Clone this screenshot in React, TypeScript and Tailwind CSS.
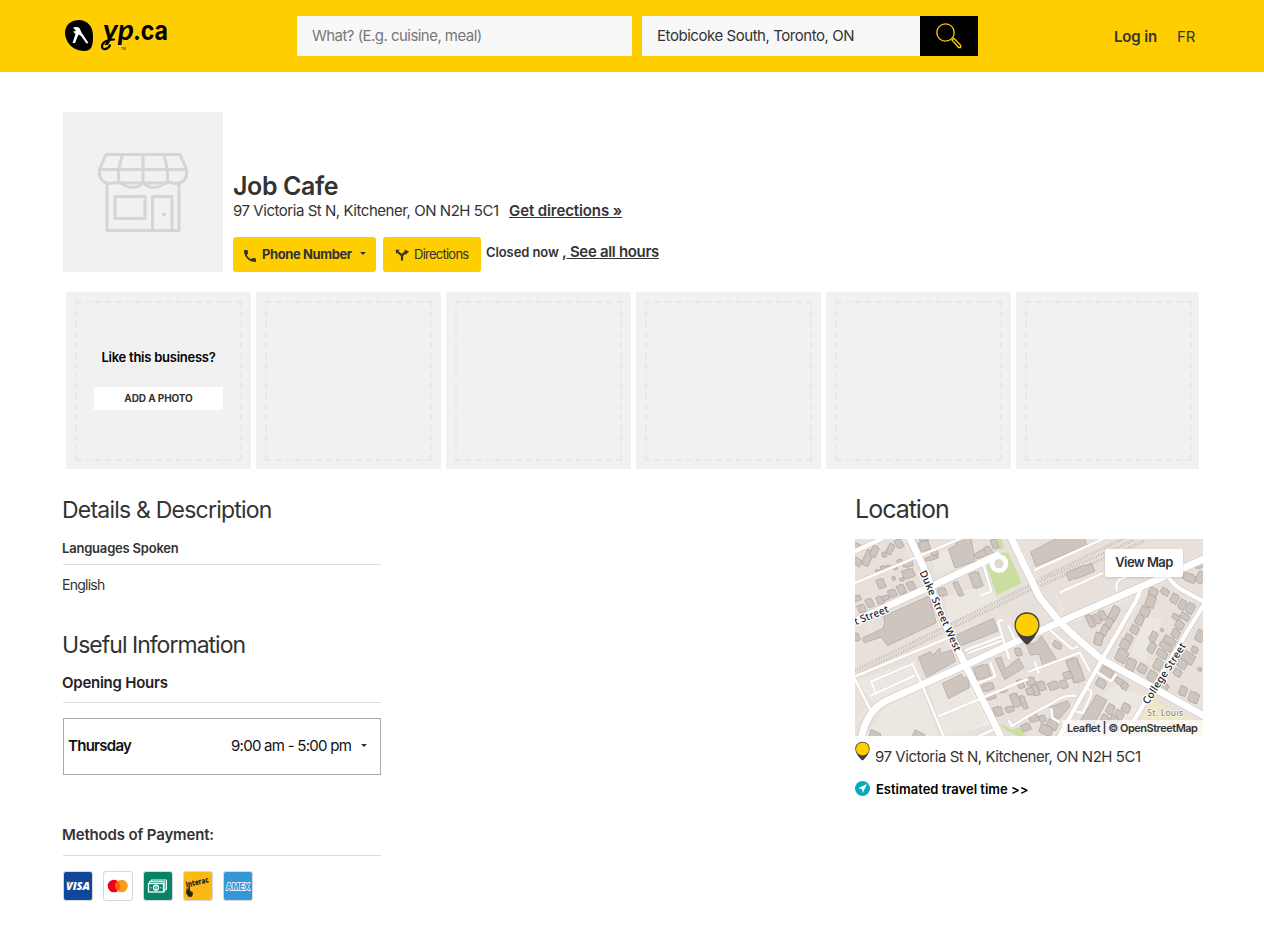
import React from "react";
import { MdCall } from "react-icons/md";

const R = 519;

const Marker = ({ className }: { className: string }) => (
  <svg viewBox="0 0 26 33" className={className}>
    <path d="M0.5 13C0.5 5.5 6 .3 13 .3S25.500 5.500 25.500 13c0 5-3 9-6 13.500L15 31.500q-2 2-4 0L6.500 26.500C3.500 22 .5 18 .5 13z" fill="#3f3f3f" />
    <circle cx="13" cy="13" r="11.300" fill="#ffce00" />
  </svg>
);

const SplitIcon = () => (
  <svg viewBox="0 0 14 12" className="h-3 w-3.5" fill="none" stroke="#333" strokeWidth="2.200">
    <path d="M7 11.500V7.600Q7 6 3 3.200M7 7.500Q7.500 4.500 11 3.200" />
    <path d="M.5.800h4.200L1.500 5z" fill="#333" stroke="none" />
    <path d="M9.500.500 14 2.500 10.500 6z" fill="#333" stroke="none" />
  </svg>
);

const Storefront = () => (
  <svg viewBox="0 0 90 80" className="h-20 w-[90px]" fill="none" stroke="#d5d5d5" strokeWidth="3" strokeLinejoin="round">
    <path d="M8 2.500h74l6.500 15v4a10 10 0 0 1-10 10q-5 0-10-2-6 6-13 6-6 0-10-5-5 5-11 5-7 0-13-6-5 2-10 2a10 10 0 0 1-10-10v-4z" />
    <path d="M1.500 17.500h87M24.500 2.500l-4 15v12M45 2.500v27M66 2.500l3.500 15v12M9 31v47.500h72V31M20 31q12 0 50 0" />
    <path d="M17 44.500h30v22H17zM54.500 78V44.500H74V78" />
    <circle cx="66" cy="62.500" r="2" fill="#d5d5d5" stroke="none" />
  </svg>
);

const Logo = () => (
  <svg viewBox="0 0 110 44" className="h-11 w-[110px] overflow-visible">
    <path d="M0 19C0 10 7 6 14 6s14 5 14 16c0 9-1 15-9 15C8 37 0 28 0 19z" fill="#000" />
    <path d="M8 13.500c2.500-1 5-.7 6.500.6l2 4.400L23.500 29l-2 .6L16 22l-2.500-1.500L10 29H7.500l3-9L8 17.500l3-.5z" fill="#fff" />
    <text x="38" y="26" fontFamily="Lato, sans-serif" fontSize="29" fontStyle="italic" fontWeight="700" textLength="31" lengthAdjust="spacingAndGlyphs">yp</text>
    <path d="M49 25.500C41 25.500 37 29 37 32.500s5 4 8-1" fill="none" stroke="#000" strokeWidth="2.200" strokeLinecap="round" />
    <text x="68" y="26" fontFamily="Inter, sans-serif" fontSize="26" fontWeight="700" textLength="35" lengthAdjust="spacingAndGlyphs">.ca</text>
    <text x="56" y="35.500" fontFamily="Inter, sans-serif" fontSize="3">TM</text>
  </svg>
);

type Block = [number, number, number, number, number];

const blocks: Block[] = [
  [8, 28, 22, 20, 25], [8, 72, 25, 20, 35], [38, 60, 22, 48, 25], [58, 40, 20, 34, 25], [88, 50, 14, 15, 0], [106, 33, 18, 32, 30], [132, 17, 20, 28, -30],
  [68, 100, 13, 11, -20], [83, 90, 13, 13, -20], [100, 87, 14, 12, -20], [120, 88, 13, 14, -20], [134, 70, 16, 12, -20], [158, 77, 30, 20, -15], [160, 107, 34, 27, -20],
  [78, 137, 23, 29, -22], [116, 121, 11, 11, 20], [141, 124, 13, 10, -25], [91, 180, 23, 15, -25], [112, 166, 23, 23, -25], [139, 154, 22, 29, -25], [168, 143, 22, 26, -25], [75, 187, 18, 24, -25], [44, 195, 20, 27, -25], [20, 212, 21, 25, -25], [5, 181, 24, 17, -20], [4, 297, 17, 24, -20],
  [207, 5, 24, 15, -25], [208, 24, 30, 30, -20], [230, 60, 40, 12, -20], [238, 43, 20, 20, -20], [378, 48, 37, 20, -30], [400, 38, 18, 28, -30], [419, 18, 18, 30, -20],
  [262, 162, 23, 25, -20], [310, 153, 15, 46, -25], [363, 126, 29, 48, -20], [399, 447, 34, 23, -20], [408, 477, 29, 14, -20], [444, 457, 23, 13, -25], [429, 520, 25, 28, -20], [464, 514, 24, 18, -20], [481, 487, 23, 42, -20], [497, 438, 18, 27, -20], [506, 493, 14, 42, -20], [382, 402, 44, 40, -20], [490, 342, 18, 25, -20], [513, 568, 26, 22, -25],
  [R + 157, 102, 82, 29, -22], [R + 187, 249, 17, 40, -25], [R + 206, 243, 17, 32, -35], [R + 224, 232, 18, 30, -30], [R + 258, 227, 24, 45, 28], [R + 243, 256, 20, 31, 25], [R + 229, 277, 20, 33, 25], [R + 212, 303, 25, 37, 15],
  [R + 376, 162, 27, 24, 25], [R + 411, 161, 25, 19, 28], [R + 368, 190, 27, 36, 20], [R + 351, 220, 28, 28, 25], [R + 335, 246, 24, 30, 25], [R + 320, 275, 25, 24, 25], [R + 302, 302, 24, 25, 25], [R + 291, 319, 28, 28, 25], [R + 281, 354, 34, 37, 25], [R + 309, 380, 27, 35, 20], [R + 343, 392, 27, 26, 28],
  [R + 440, 182, 23, 28, 28], [R + 463, 200, 21, 29, 28], [R + 487, 211, 23, 31, 28], [R + 470, 236, 29, 19, 28], [R + 444, 238, 24, 16, 28], [R + 455, 261, 26, 24, 28], [R + 443, 287, 25, 25, 28], [R + 425, 308, 38, 21, 28], [R + 414, 326, 40, 19, 28], [R + 402, 348, 33, 22, 28], [R + 376, 296, 20, 30, 28], [R + 371, 329, 21, 31, 28], [R + 402, 276, 9, 9, 0], [R + 390, 380, 25, 33, 28], [R + 373, 415, 28, 30, 28], [R + 409, 448, 23, 25, 28],
  [R + 480, 359, 39, 32, 28], [R + 462, 377, 30, 26, 28], [R + 449, 404, 24, 21, 28], [R + 465, 459, 22, 28, 20], [R + 497, 478, 30, 31, 20], [R + 515, 394, 11, 11, 0], [R + 500, 335, 20, 18, 25], [R + 516, 294, 24, 34, 25], [R + 484, 119, 39, 24, 20], [R + 517, 118, 22, 34, 28], [R + 516, 79, 30, 21, -25],
  [R + 88, 321, 28, 18, 28], [R + 142, 397, 34, 74, -20], [R + 119, 412, 25, 22, -20], [R + 107, 439, 21, 25, -20], [R + 76, 443, 28, 25, -25], [R + 40, 444, 22, 29, -20], [R + 22, 457, 20, 33, -20], [R + 8, 430, 25, 24, -20], [R + 6, 460, 21, 22, -20], [R + 237, 404, 38, 28, 25], [R + 219, 436, 29, 25, 25], [R + 276, 431, 30, 18, 28], [R + 290, 444, 20, 22, 28],
  [R + 247, 514, 22, 30, 25], [R + 272, 533, 27, 30, 28], [R + 294, 510, 25, 26, 25], [R + 257, 548, 24, 28, 25], [R + 230, 542, 22, 24, 25], [R + 43, 542, 19, 21, -25], [R + 17, 540, 26, 24, -25], [R + 73, 560, 33, 24, 28], [R + 54, 576, 38, 28, 20],
];

const shapes = [
  "M86 235 222 174 244 254 98 323 78 298 28 314 22 300 84 271 89 255z",
  "M280 34 305 20 300 0H348L360 70 300 90z",
  "M302 292 415 241 429 279 316 324z",
  "M190 358 226 341 234 352 254 330 258 347 289 336 302 370 215 417z",
  "M262 436 320 408 326 419 338 415 344 449 280 482z",
  "M48 574 78 588 74 600H40z M180 575 210 590 206 600H170z",
  "M420 362 438 357 451 393 491 360 507 389 449 425z",
  `M${R + 8} 42 ${R + 88} 0H${R + 170}L${R + 175} 22 ${R + 24} 85z`,
  `M${R + 25} 313 ${R + 40} 293 ${R + 87} 367 ${R + 45} 386 ${R + 34} 349 ${R + 8} 351 ${R - 5} 322z`,
  `M${R + 205} 470 ${R + 237} 486 ${R + 196} 566 ${R + 158} 547z`,
  `M${R + 65} 508 ${R + 119} 488 ${R + 126} 505 ${R + 92} 544 ${R + 73} 533z`,
];

const mainRoads = [
  "M18 605C30 540 60 500 105 483L205 438 330 382 519 295 619 250 850 150 1060 57",
  "M160 -10 218 115 246 207 333 385 442 605",
  "M0 250 100 203 235 142 435 48",
  `M464 -10 ${R + 33} 175 ${R + 85} 240 Q${R + 115} 275 ${R + 222} 365L${R + 540} 540`,
];
const sideRoads = [
  `M${R + 535} 188 ${R + 490} 260 ${R + 315} 552 ${R + 295} 605`,
  `M${R + 335} 145 Q${R + 342} 162 ${R + 300} 230L${R + 222} 365 ${R + 88} 605`,
  `M${R + 420} 112 Q${R + 432} 140 ${R + 470} 160L${R + 535} 195`,
  "M0 40 110 -12",
];
const lanes = [
  "M-5 137 160 68 340 -8", "M-4 415 48 520",
  "M0 415 290 295", "M62 464 48 431 172 378 202 442 M45 474 180 412", "M202 442 270 605 M250 535 500 430 519 424",
  "M386 82 409 160 376 173 M330 337 440 295 M445 245 429 251 463 364 M460 262 483 310 M340 345 440 308 M363 438 421 415 405 370",
  `M${R + 18} 97 ${R + 242} -5 M${R + 268} 160 Q${R + 258} 128 ${R + 285} 120L${R + 360} 88 M${R + 95} 164 ${R + 225} 105`,
  `M${R + 67} 277 ${R + 132} 333 ${R + 151} 325 M${R} 402 ${R + 155} 344 ${R + 186} 400 M${R + 20} 370 ${R + 33} 405`,
  `M${R + 204} 400 ${R + 249} 430 ${R + 265} 407 M${R + 172} 455 Q${R + 200} 450 ${R + 185} 480L${R + 165} 525 ${R + 145} 520`,
  `M460 545 470 565 ${R} 535 ${R + 95} 482 Q${R + 120} 470 ${R + 145} 474 M370 595 415 575 M${R + 70} 510 ${R + 73} 540 ${R + 95} 553`,
];

const StreetMap = () => (
  <svg viewBox="0 3 1044 591" className="block h-[197px] w-[348px]" preserveAspectRatio="none">
    <rect y="0" width="1044" height="600" fill="#e8e0da" />
    <g fill="#ede7e1">
      <path d="M230 50 280 35 300 90 240 110z M270 180 400 130 430 195 280 255z M0 430 180 365 205 435 60 500z M220 445 330 400 410 560 265 594z M90 510 200 450 250 594H30z" />
      <path d={`M${R + 350} 230 ${R + 403} 245 ${R + 350} 370 ${R + 308} 350z M${R + 210} 490 ${R + 260} 440 ${R + 360} 480 ${R + 310} 594H${R + 180}z`} />
    </g>
    <path d="M396 85 445 43 460 45 500 135 425 172z M425 0H440L447 28 435 36z M435 555 470 575 495 568 515 594H488L450 575z" fill="#c9dfa0" />
    <path d={`M${R + 360} 482 ${R + 525} 560V594H${R + 330}z`} fill="#f0e7c4" />
    <g fill="none" stroke="#c3bcb6" strokeWidth="9" strokeDasharray="3 5">
      <path d="M0 398 519 145 840 5" /><path d="M0 411 519 159 870 8" /><path d={`M${R + 40} 120 ${R + 290} 0`} />
    </g>
    <g fill="none" stroke="#fff" strokeWidth="2" strokeDasharray="5 4">
      <path d="M145 0 232 215 318 400 420 594M485 0 570 185 665 290M80 505 500 315 840 175M35 240 60 300M400 490 420 545 300 594M0 560 45 500M600 290 520 480M595 155 625 215 580 245M860 170 760 390" />
    </g>
    <g fill="#cec5be" stroke="#aaa39e" strokeWidth="2">
      {shapes.map((d) => <path key={d} d={d} />)}
      {blocks.map(([x, y, w, h, a]) => (
        <path key={`${x}-${y}`} transform={`translate(${x} ${y}) rotate(${a})`} d={`M${-w / 2} ${-h / 2}H${w / 4}v3H${w / 2}V${h / 2}H${-w / 4}v-3H${-w / 2}z`} />
      ))}
    </g>
    <g fill="none" strokeLinejoin="round">
      {lanes.map((d) => <path key={d} d={d} stroke="#d5cec8" strokeWidth="9" />)}
      {sideRoads.map((d) => <path key={d} d={d} stroke="#cbc5c0" strokeWidth="16" />)}
      {mainRoads.map((d) => <path key={d} d={d} stroke="#c9c3be" strokeWidth="24" />)}
      {lanes.map((d) => <path key={d} d={d} stroke="#fff" strokeWidth="7" />)}
      {sideRoads.map((d) => <path key={d} d={d} stroke="#fff" strokeWidth="13" />)}
      {mainRoads.map((d) => <path key={d} d={d} stroke="#fff" strokeWidth="21" />)}
    </g>
    <circle cx="432" cy="77" r="21" fill="#dfd8d2" stroke="#fff" strokeWidth="14" />
    <g fontFamily="Noto Sans, sans-serif" fontSize="31" fontWeight="500" fill="#22222e" stroke="#fff" strokeWidth="7" paintOrder="stroke" strokeLinejoin="round">
      <text transform="translate(193 103) rotate(66)" textLength="262">Duke Street West</text>
      <text transform="translate(2 262) rotate(-22)" textLength="109">t Street</text>
      <text transform={`translate(${R + 360} 501) rotate(-57)`} textLength="212">College Street</text>
      <text x={R + 358} y="533" fontSize="25" fill="#8a8173" strokeWidth="3" textLength="107">St. Louis</text>
    </g>
  </svg>
);

const frame = "flex h-[30px] w-[30px] items-center justify-center rounded-[3px] border border-[#d5d8dc]";
const glyph = "h-7 w-7 overflow-visible";

const Payments = () => (
  <div className="mt-[15px] flex gap-2.5">
    <div className={frame + " bg-[#10479a]"}>
      <svg viewBox="0 0 28 28" className={glyph}><text x="2" y="18" fontFamily="Open Sans, sans-serif" fontSize="11" fontWeight="800" fontStyle="italic" fill="#fff" textLength="24" lengthAdjust="spacingAndGlyphs">VISA</text><path d="M2 9.800h4l1 4z" fill="#f7b620" /></svg>
    </div>
    <div className={frame + " bg-white"}>
      <svg viewBox="0 0 28 28" className={glyph}><circle cx="10" cy="14" r="6.300" fill="#eb001b" /><circle cx="17.500" cy="14" r="6.300" fill="#f79e1b" /><path d="M13.750 8.900a6.300 6.300 0 0 1 0 10.200 6.300 6.300 0 0 1 0-10.200" fill="#ff5f00" /></svg>
    </div>
    <div className={frame + " bg-[#058565]"}>
      <svg viewBox="0 0 28 28" className={glyph} fill="none" stroke="#fff"><path d="M7 9.500V8h15.500v9.500H21M5.500 11.500V9.700H20.800v9.800H19" /><rect x="4.500" y="11.500" width="15" height="8.500" strokeWidth="1.300" /><circle cx="12" cy="15.700" r="2.500" strokeWidth="1.300" /><path d="M12 13v5.500M6.500 15.800h1.200M16.200 15.800h1.200" /></svg>
    </div>
    <div className={frame + " bg-[#fdb913]"}>
      <svg viewBox="0 0 28 28" className={glyph}><text transform="translate(2.500 15.500) rotate(-13)" fontFamily="Open Sans, sans-serif" fontSize="8" fontWeight="800" fill="#222" textLength="23" lengthAdjust="spacingAndGlyphs">Interac</text><path d="M2.500 16.500h1.300v3l.8-5h1.200l.3 4.500 2.300.7.600 2-1 3H4.500L2 21z" fill="#222" /></svg>
    </div>
    <div className={frame + " bg-[#3498d8]"}>
      <svg viewBox="0 0 28 28" className={glyph}><text x="2" y="17.500" fontFamily="Inter, sans-serif" fontSize="9" fontWeight="800" fill="#3498d8" stroke="#fff" strokeWidth="1.500" paintOrder="stroke" textLength="24" lengthAdjust="spacingAndGlyphs">AMEX</text></svg>
    </div>
  </div>
);

const Caret = () => <span className="h-0 w-0 -translate-y-px border-x-[3px] border-t-[3px] border-x-transparent border-t-[#333]" />;

export default function App() {
  return (
    <div className="h-[949px] w-[1264px] overflow-hidden bg-white font-['Inter',sans-serif] text-[#333]">
      <header className="flex h-[72px] bg-[#ffce00] pl-[65px]">
        <div className="w-[232px] pt-[14px]"><Logo /></div>
        <div className="flex pt-4 text-[15px] leading-10">
          <div className="h-10 w-[335px] bg-[#f8f8f8] pl-[15px] tracking-[-0.54px] text-[#777]">What? (E.g. cuisine, meal)</div>
          <div className="ml-2.5 h-10 w-[278px] bg-[#f8f8f8] pl-[15px] tracking-[-0.45px]">Etobicoke South, Toronto, ON</div>
          <button aria-label="Search" className="flex h-10 w-[58px] items-center justify-center bg-black">
            <svg viewBox="0 0 26 26" className="h-[26px] w-[26px]" fill="none" stroke="#ffce00" strokeWidth="1.300"><circle cx="9.500" cy="9.500" r="8.700" /><path d="m16 17 1.800-1.800 6.800 7v2.300h-2z" /></svg>
          </button>
        </div>
        <nav className="flex gap-5 pl-[136px] pt-[17px] text-[15px] leading-10">
          <span className="w-[43px] whitespace-nowrap font-semibold tracking-[-0.15px]">Log in</span><span>FR</span>
        </nav>
      </header>

      <main className="pl-[63px]">
        <section className="flex pt-10">
          <div className="flex h-40 w-40 items-center justify-center bg-[#f1f1f1]"><Storefront /></div>
          <div className="pl-2.5 pt-[59px]">
            <h1 className="h-[30px] text-[25px] font-semibold leading-[31px] tracking-[-0.4px]">Job Cafe</h1>
            <div className="flex h-9 whitespace-nowrap text-[15px] leading-[20px]">
              <span className="w-[276px] tracking-[-0.46px]">97 Victoria St N, Kitchener, ON N2H 5C1</span>
              <a className="font-semibold tracking-[-0.1px] underline">Get directions »</a>
            </div>
            <div className="flex whitespace-nowrap">
              <button className="flex h-[35px] w-[143px] items-center rounded-[3px] bg-[#ffce00] pl-[9px] text-[13px] font-bold">
                <MdCall className="h-4 w-4 translate-y-px" /><span className="ml-1 w-[98px] text-left tracking-[-0.4px]">Phone Number</span><Caret />
              </button>
              <button className="ml-[7px] flex h-[35px] w-[98px] items-center rounded-[3px] bg-[#ffce00] pl-3 text-[13px]">
                <SplitIcon /><span className="ml-[5px] tracking-[-0.75px]">Directions</span>
              </button>
              <div className="flex pl-[5px] leading-[30px]">
                <span className="w-[76px] text-[13px] font-semibold tracking-[-0.1px]">Closed now</span>
                <a className="text-[15px] font-semibold tracking-[-0.32px]">,<span className="underline">&nbsp;See all hours</span></a>
              </div>
            </div>
          </div>
        </section>

        <section className="ml-[3px] mt-5 flex h-[177px] w-[1133px] gap-[5px] overflow-hidden">
          {[0, 1, 2, 3, 4, 5].map((n) => (
            <div key={n} className="w-[185px] shrink-0 bg-[#f1f1f1] p-[9px]">
              <div className="flex h-[160px] w-[167px] flex-col items-center border-2 border-dashed border-[#e8e8e8]">
                {n === 0 && (
                  <>
                    <p className="mt-11 text-[13px] font-semibold leading-5 tracking-[-0.25px] text-black">Like this business?</p>
                    <button className="mt-5 h-[23px] w-[129px] rounded-[2px] bg-white text-[10px] font-bold tracking-[-0.1px]">ADD A PHOTO</button>
                  </>
                )}
              </div>
            </div>
          ))}
        </section>

        <div className="flex">
          <section className="w-[318px] pt-[26px]">
            <h2 className="-ml-px h-[30px] whitespace-nowrap text-[23px] leading-[30px] tracking-[-0.78px]">Details &amp; Description</h2>
            <h3 className="mt-[13px] h-[27px] border-b border-[#ddd] text-[13px] font-semibold leading-5 tracking-[-0.2px]"><span className="-ml-px">Languages Spoken</span></h3>
            <p className="-ml-px mt-2.5 text-[14px] leading-5 tracking-[-0.75px]">English</p>
            <h2 className="-ml-px mt-[35px] h-[30px] whitespace-nowrap text-[23px] leading-[30px] tracking-[-0.98px]">Useful Information</h2>
            <h3 className="mt-[13px] h-[30px] border-b border-[#ddd] text-[15px] font-semibold leading-5 tracking-[-0.25px] text-[#222]"><span className="-ml-px">Opening Hours</span></h3>
            <div className="mt-[15px] flex h-[57px] items-center border border-[#aaa] pl-[5px] text-[15px] tracking-[-0.73px] text-[#111]">
              <b className="-ml-px w-[163px] font-semibold">Thursday</b><span className="w-[130px] whitespace-nowrap">9:00 am - 5:00 pm</span><Caret />
            </div>
            <h3 className="mt-[50px] h-[31px] border-b border-[#ddd] text-[15px] font-semibold leading-5 tracking-[-0.15px]"><span className="-ml-px">Methods of Payment:</span></h3>
            <Payments />
          </section>

          <section className="ml-[474px] w-[348px] pt-[25px]">
            <h2 className="h-[45px] text-[25px] leading-[30px] tracking-[-1px]">Location</h2>
            <div className="relative h-[197px] overflow-hidden">
              <StreetMap />
              <Marker className="absolute left-[159px] top-[73px] h-[33px] w-[26px]" />
              <button className="absolute left-[250px] top-2.5 h-7 w-[78px] rounded-[2px] bg-white text-[13px] font-semibold tracking-[-0.55px] shadow-sm">View Map</button>
              <span className="absolute bottom-0 right-0 h-4 w-[141px] whitespace-nowrap bg-white/70 pl-[5px] text-[11px] font-semibold leading-4 tracking-[-0.5px]">Leaflet | © OpenStreetMap</span>
            </div>
            <p className="flex h-[42px] pt-[5px] text-[15px] leading-8 tracking-[-0.46px]"><Marker className="mr-[5px] h-5 w-[15px] shrink-0" />97 Victoria St N, Kitchener, ON N2H 5C1</p>
            <p className="flex items-center text-[13px] font-semibold leading-[22px] text-black">
              <svg viewBox="0 0 15 15" className="mr-1.5 h-[15px] w-[15px] -translate-y-px"><circle cx="7.500" cy="7.500" r="7.500" fill="#04aabd" /><path d="M12 3 3 7.300l4 .7.700 4z" fill="#fff" /></svg>
              Estimated travel time &gt;&gt;
            </p>
          </section>
        </div>
      </main>
    </div>
  );
}
